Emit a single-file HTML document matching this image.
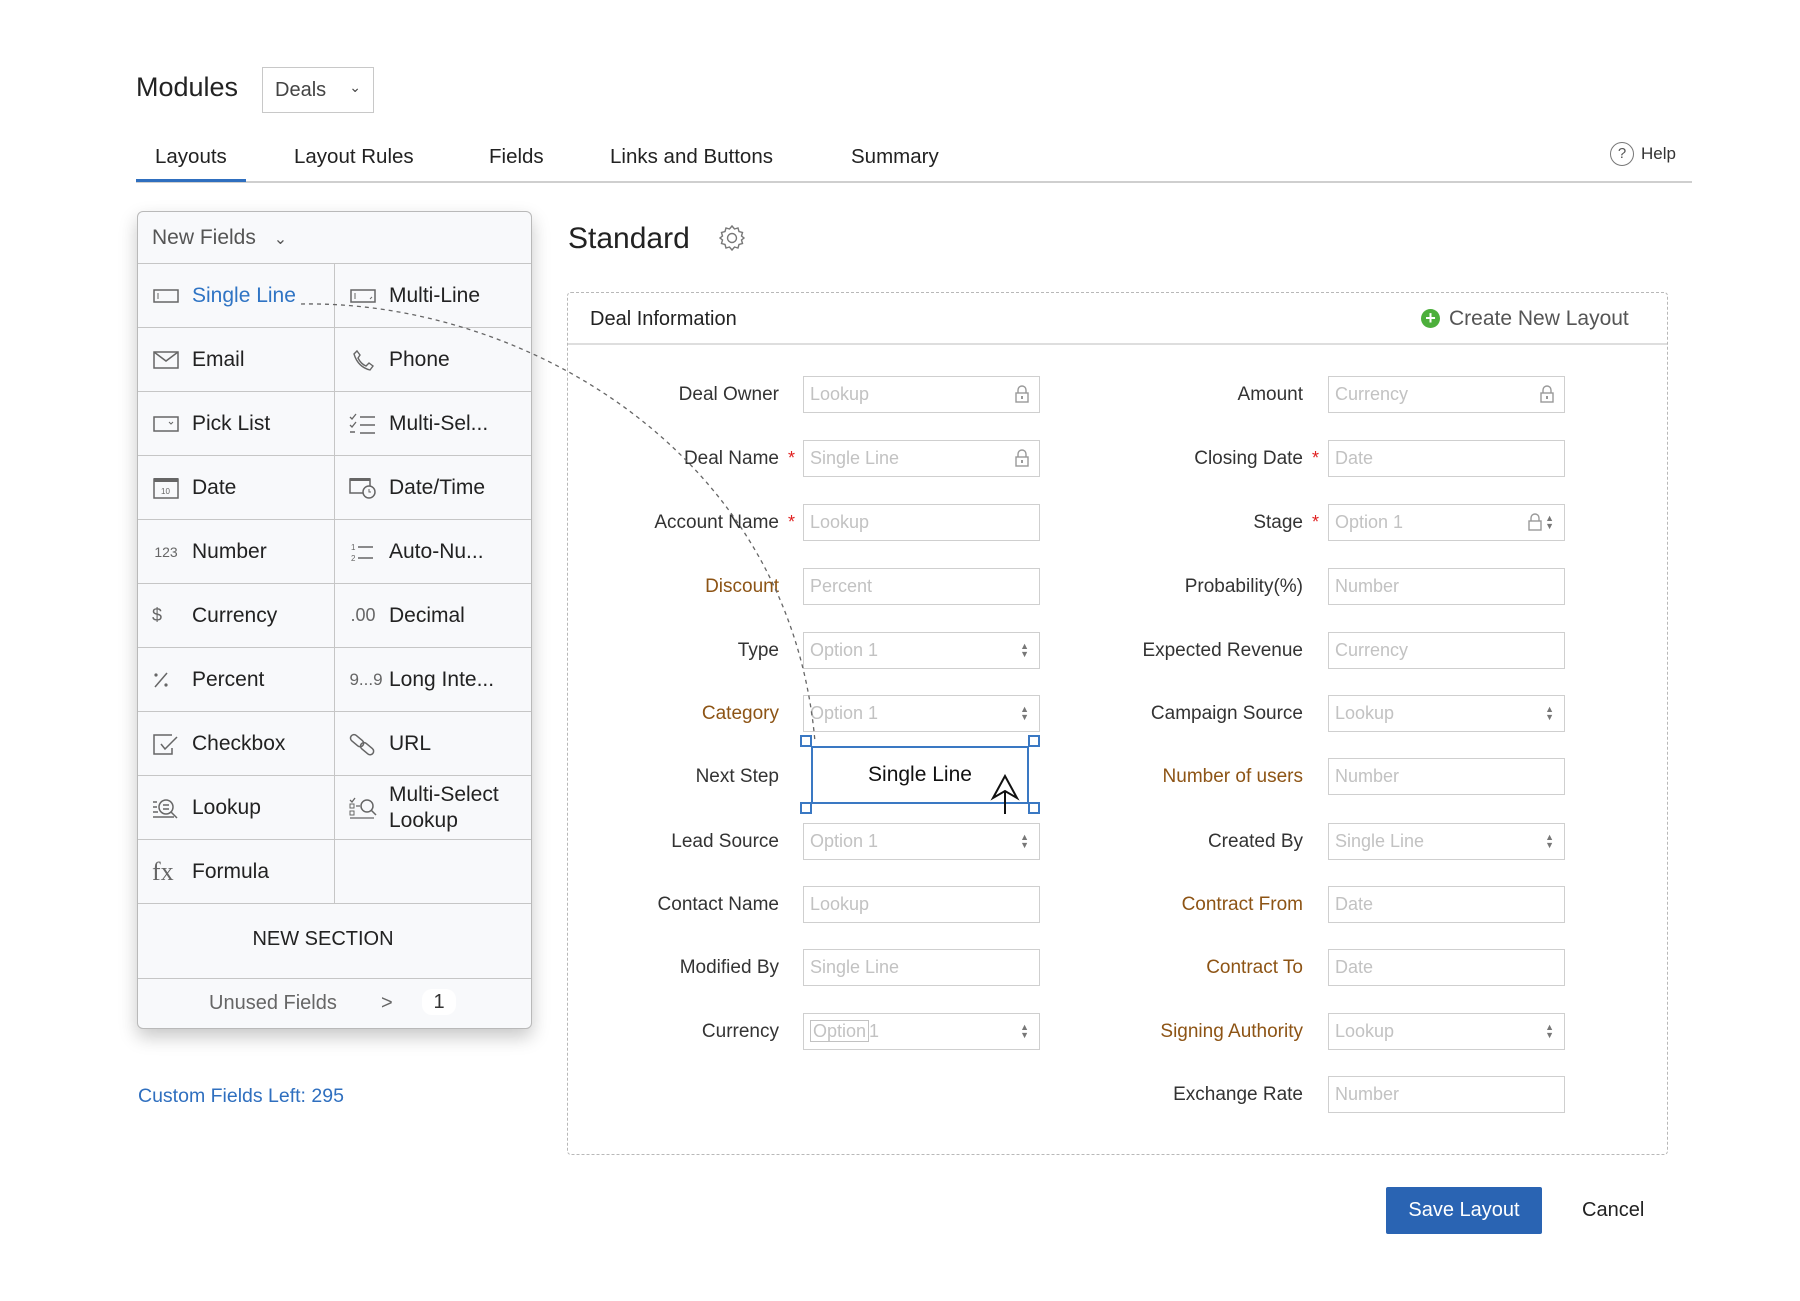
<!DOCTYPE html>
<html><head><meta charset="utf-8"><style>
*{box-sizing:border-box;margin:0;padding:0}
body{width:1800px;height:1301px;background:#fff;font-family:"Liberation Sans",sans-serif;color:#333;position:relative;overflow:hidden}
.a{position:absolute}
.tab{position:absolute;top:145px;font-size:20.5px;color:#222}
.panel{position:absolute;left:137px;top:211px;width:395px;height:818px;background:#f8f9fb;border:1px solid #b9b9b9;border-radius:6px;box-shadow:0 8px 18px rgba(0,0,0,.22)}
.row{position:absolute;left:0;width:393px;height:64px;border-top:1px solid #c6c6c6}
.row .c{position:absolute;top:0;height:63px;display:flex;align-items:center;font-size:21px;color:#222}
.row .l{left:0;width:197px;padding-left:14px;border-right:1px solid #c6c6c6}
.row .r{left:197px;width:196px;padding-left:14px}
.ic{width:28px;margin-right:12px;display:inline-flex;justify-content:center;color:#666;font-size:14px}
.lab{position:absolute;font-size:19px;color:#333;text-align:right;width:300px;line-height:22px}
.br{color:#8d5415}
.inp{position:absolute;width:237px;height:37px;border:1.5px solid #cfcfcf;font-size:18px;color:#c2c2c2;padding-left:6px;line-height:34px;background:#fff}
.star{position:absolute;color:#e02020;font-size:18px}
.lk{position:absolute;right:10px;top:8px}
.ud{position:absolute;right:10px;top:9px;font-size:9px;line-height:8px;color:#777}
</style></head><body>
<div class="a" style="left:136px;top:72px;font-size:27px;color:#222">Modules</div>
<div class="a" style="left:262px;top:67px;width:112px;height:46px;border:1px solid #c8c8c8;font-size:20px;color:#444;padding:11px 0 0 12px">Deals<span style="position:absolute;right:12px;top:11px;font-size:14px">&#8964;</span></div>
<div class="tab" style="left:155px">Layouts</div>
<div class="tab" style="left:294px">Layout Rules</div>
<div class="tab" style="left:489px">Fields</div>
<div class="tab" style="left:610px">Links and Buttons</div>
<div class="tab" style="left:851px">Summary</div>
<div class="a" style="left:1610px;top:142px;width:24px;height:24px;border:1.5px solid #777;border-radius:50%;font-size:15px;text-align:center;line-height:21px;color:#555">?</div>
<div class="a" style="left:1641px;top:144px;font-size:17px;color:#333">Help</div>
<div class="a" style="left:136px;top:181px;width:1556px;height:2px;background:#cfcfcf"></div>
<div class="a" style="left:136px;top:179px;width:110px;height:3px;background:#2f6fbf"></div>

<div class="panel">
<div class="a" style="left:14px;top:14px;font-size:21px;color:#555">New Fields <span style="font-size:16px;margin-left:12px">&#8964;</span></div>
<div class="row" style="top:51px"><div class="c l" style="color:#2f74c4"><span class="ic"><svg width="26" height="14"><rect x="1" y="1" width="24" height="12" fill="none" stroke="#666" stroke-width="1.5"/><line x1="5" y1="4" x2="5" y2="10" stroke="#666"/></svg></span>Single Line</div><div class="c r"><span class="ic"><svg width="26" height="14"><rect x="1" y="1" width="24" height="12" fill="none" stroke="#666" stroke-width="1.5"/><line x1="5" y1="4" x2="5" y2="10" stroke="#666"/><line x1="20" y1="10" x2="22" y2="8" stroke="#666"/></svg></span>Multi-Line</div></div>
<div class="row" style="top:115px"><div class="c l"><span class="ic"><svg width="26" height="18"><rect x="1" y="1" width="24" height="16" fill="none" stroke="#666" stroke-width="1.5"/><path d="M1 1 L13 10 L25 1" fill="none" stroke="#666" stroke-width="1.5"/></svg></span>Email</div><div class="c r"><span class="ic"><svg width="22" height="22"><path d="M5 2 L8 6 L6 9 Q9 15 14 17 L17 14 L21 17 L18 21 Q6 18 2 5 Z" fill="none" stroke="#666" stroke-width="1.4"/></svg></span>Phone</div></div>
<div class="row" style="top:179px"><div class="c l"><span class="ic"><svg width="26" height="16"><rect x="1" y="1" width="24" height="14" fill="none" stroke="#666" stroke-width="1.5"/><path d="M16 6 L18 8 L20 6" fill="none" stroke="#666"/></svg></span>Pick List</div><div class="c r"><span class="ic"><svg width="28" height="22"><path d="M1 4 L3 6 L7 1 M1 12 L3 14 L7 9" fill="none" stroke="#666" stroke-width="1.3"/><path d="M11 4 H26 M11 12 H26 M11 20 H26 M1 19 H6" stroke="#666" stroke-width="1.5"/></svg></span>Multi-Sel...</div></div>
<div class="row" style="top:243px"><div class="c l"><span class="ic"><svg width="26" height="22"><rect x="1" y="2" width="24" height="19" fill="none" stroke="#666" stroke-width="1.5"/><rect x="1" y="1" width="24" height="4" fill="#666"/><text x="8" y="17" font-size="8" fill="#666" font-family="Liberation Sans">10</text></svg></span>Date</div><div class="c r"><span class="ic"><svg width="28" height="22"><rect x="1" y="2" width="20" height="14" fill="none" stroke="#666" stroke-width="1.5"/><rect x="1" y="1" width="20" height="3" fill="#666"/><circle cx="20" cy="15" r="6" fill="#f8f9fb" stroke="#666" stroke-width="1.5"/><path d="M20 12 V15 H22" fill="none" stroke="#666"/></svg></span>Date/Time</div></div>
<div class="row" style="top:307px"><div class="c l"><span class="ic">123</span>Number</div><div class="c r"><span class="ic"><svg width="24" height="20"><text x="0" y="8" font-size="8" fill="#666" font-family="Liberation Sans">1</text><text x="0" y="19" font-size="8" fill="#666" font-family="Liberation Sans">2</text><path d="M7 5 H22 M7 16 H22" stroke="#666" stroke-width="1.5"/></svg></span>Auto-Nu...</div></div>
<div class="row" style="top:371px"><div class="c l"><span class="ic" style="font-size:18px;justify-content:flex-start">$</span>Currency</div><div class="c r"><span class="ic" style="font-size:18px">.00</span>Decimal</div></div>
<div class="row" style="top:435px"><div class="c l"><span class="ic" style="justify-content:flex-start"><svg width="18" height="18"><path d="M15 2 L3 16" stroke="#666" stroke-width="1.5"/><circle cx="4" cy="4" r="1.6" fill="#666"/><circle cx="14" cy="14" r="1.6" fill="#666"/></svg></span>Percent</div><div class="c r"><span class="ic" style="font-size:17px;width:34px;margin-right:6px">9...9</span>Long Inte...</div></div>
<div class="row" style="top:499px"><div class="c l"><span class="ic"><svg width="26" height="22"><path d="M19 2 H1 V21 H19 V15" fill="none" stroke="#666" stroke-width="1.5"/><path d="M8 11 L12 16 L24 4" fill="none" stroke="#666" stroke-width="1.5"/></svg></span>Checkbox</div><div class="c r"><span class="ic"><svg width="28" height="26"><rect x="1" y="6" width="15" height="7" rx="3.5" transform="rotate(40 8 9)" fill="none" stroke="#666" stroke-width="1.5"/><rect x="11" y="14" width="15" height="7" rx="3.5" transform="rotate(40 18 17)" fill="none" stroke="#666" stroke-width="1.5"/></svg></span>URL</div></div>
<div class="row" style="top:563px"><div class="c l"><span class="ic"><svg width="30" height="24"><path d="M1 6 H5 M1 11 H5 M1 16 H6 M1 21 H22" stroke="#666" stroke-width="1.4"/><circle cx="14" cy="11" r="7" fill="none" stroke="#666" stroke-width="1.5"/><path d="M11 9 H17 M11 13 H17 M19 16 L25 22" stroke="#666" stroke-width="1.5"/></svg></span>Lookup</div><div class="c r" style="line-height:26px"><span class="ic"><svg width="30" height="24"><rect x="1" y="8" width="4" height="4" fill="none" stroke="#666"/><rect x="1" y="15" width="4" height="4" fill="none" stroke="#666"/><path d="M1 4 L3 6 L6 2 M7 10 H11 M1 22 H25" fill="none" stroke="#666" stroke-width="1.3"/><circle cx="18" cy="10" r="6" fill="none" stroke="#666" stroke-width="1.5"/><path d="M22 14 L27 19" stroke="#666" stroke-width="1.5"/></svg></span>Multi-Select<br>Lookup</div></div>
<div class="row" style="top:627px"><div class="c l"><span class="ic" style="font-size:26px;font-family:'Liberation Serif',serif;justify-content:flex-start">fx</span>Formula</div><div class="c r"></div></div>
<div class="row" style="top:691px;height:75px"><div class="a" style="left:0;width:370px;top:24px;text-align:center;font-size:20px;color:#222">NEW SECTION</div></div>
<div class="row" style="top:766px;height:50px;border-radius:0 0 6px 6px"><div class="a" style="left:71px;top:13px;font-size:20px;color:#666">Unused Fields</div><div class="a" style="left:243px;top:13px;font-size:20px;color:#666">&gt;</div><div class="a" style="left:284px;top:10px;width:34px;height:26px;background:#fff;border-radius:10px;text-align:center;font-size:20px;line-height:26px;color:#333">1</div></div>
</div>
<div class="a" style="left:138px;top:1085px;font-size:19.5px;color:#2f6fbf">Custom Fields Left: 295</div>

<div class="a" style="left:568px;top:222px;font-size:30px;color:#222">Standard</div>
<svg class="a" style="left:718px;top:224px" width="28" height="28" viewBox="0 0 28 28"><path d="M14 2 L16.5 5 L20 4 L21 7.5 L24.5 8.5 L23.5 12 L26 14 L23.5 16 L24.5 19.5 L21 20.5 L20 24 L16.5 23 L14 26 L11.5 23 L8 24 L7 20.5 L3.5 19.5 L4.5 16 L2 14 L4.5 12 L3.5 8.5 L7 7.5 L8 4 L11.5 5 Z" fill="none" stroke="#777" stroke-width="1.4"/><circle cx="14" cy="14" r="4.5" fill="none" stroke="#777" stroke-width="1.4"/></svg>

<div class="a" style="left:567px;top:292px;width:1101px;height:863px;border:1.5px dashed #b8b8b8;border-radius:4px"></div>
<div class="a" style="left:568px;top:343px;width:1099px;height:2px;background:#dedede"></div>
<div class="a" style="left:590px;top:308px;font-size:20px;color:#222">Deal Information</div>
<div class="a" style="left:1421px;top:309px;width:19px;height:19px;border-radius:50%;background:#4caf3b;color:#fff;font-size:18px;line-height:19px;text-align:center;font-weight:bold">+</div>
<div class="a" style="left:1449px;top:307px;font-size:21px;color:#555">Create New Layout</div>

<div class="lab" style="left:479px;top:384px">Deal Owner</div><div class="inp" style="left:803px;top:376px">Lookup<svg class="lk" width="14" height="18"><path d="M3 8 V5 a4 4 0 0 1 8 0 V8" fill="none" stroke="#999" stroke-width="1.4"/><rect x="1" y="8" width="12" height="9" fill="none" stroke="#999" stroke-width="1.4"/><rect x="6" y="11" width="2" height="3" fill="#999"/></svg></div>
<div class="lab" style="left:479px;top:448px">Deal Name</div><span class="star" style="left:788px;top:448px">*</span><div class="inp" style="left:803px;top:440px">Single Line<svg class="lk" width="14" height="18"><path d="M3 8 V5 a4 4 0 0 1 8 0 V8" fill="none" stroke="#999" stroke-width="1.4"/><rect x="1" y="8" width="12" height="9" fill="none" stroke="#999" stroke-width="1.4"/><rect x="6" y="11" width="2" height="3" fill="#999"/></svg></div>
<div class="lab" style="left:479px;top:512px">Account Name</div><span class="star" style="left:788px;top:512px">*</span><div class="inp" style="left:803px;top:504px">Lookup</div>
<div class="lab br" style="left:479px;top:576px">Discount</div><div class="inp" style="left:803px;top:568px">Percent</div>
<div class="lab" style="left:479px;top:640px">Type</div><div class="inp" style="left:803px;top:632px">Option 1<span class="ud">&#9650;<br>&#9660;</span></div>
<div class="lab br" style="left:479px;top:703px">Category</div><div class="inp" style="left:803px;top:695px">Option 1<span class="ud">&#9650;<br>&#9660;</span></div>
<div class="lab" style="left:479px;top:766px">Next Step</div>
<div class="lab" style="left:479px;top:831px">Lead Source</div><div class="inp" style="left:803px;top:823px">Option 1<span class="ud">&#9650;<br>&#9660;</span></div>
<div class="lab" style="left:479px;top:894px">Contact Name</div><div class="inp" style="left:803px;top:886px">Lookup</div>
<div class="lab" style="left:479px;top:957px">Modified By</div><div class="inp" style="left:803px;top:949px">Single Line</div>
<div class="lab" style="left:479px;top:1021px">Currency</div><div class="inp" style="left:803px;top:1013px"><span style="border:1px solid #c2c2c2;padding:0 2px;line-height:16px">Option</span>1<span class="ud">&#9650;<br>&#9660;</span></div>

<div class="lab" style="left:1003px;top:384px">Amount</div><div class="inp" style="left:1328px;top:376px">Currency<svg class="lk" width="14" height="18"><path d="M3 8 V5 a4 4 0 0 1 8 0 V8" fill="none" stroke="#999" stroke-width="1.4"/><rect x="1" y="8" width="12" height="9" fill="none" stroke="#999" stroke-width="1.4"/><rect x="6" y="11" width="2" height="3" fill="#999"/></svg></div>
<div class="lab" style="left:1003px;top:448px">Closing Date</div><span class="star" style="left:1312px;top:448px">*</span><div class="inp" style="left:1328px;top:440px">Date</div>
<div class="lab" style="left:1003px;top:512px">Stage</div><span class="star" style="left:1312px;top:512px">*</span><div class="inp" style="left:1328px;top:504px">Option 1<svg class="lk" style="right:22px" width="14" height="18"><path d="M3 8 V5 a4 4 0 0 1 8 0 V8" fill="none" stroke="#999" stroke-width="1.4"/><rect x="1" y="8" width="12" height="9" fill="none" stroke="#999" stroke-width="1.4"/></svg><span class="ud">&#9650;<br>&#9660;</span></div>
<div class="lab" style="left:1003px;top:576px">Probability(%)</div><div class="inp" style="left:1328px;top:568px">Number</div>
<div class="lab" style="left:1003px;top:640px">Expected Revenue</div><div class="inp" style="left:1328px;top:632px">Currency</div>
<div class="lab" style="left:1003px;top:703px">Campaign Source</div><div class="inp" style="left:1328px;top:695px">Lookup<span class="ud">&#9650;<br>&#9660;</span></div>
<div class="lab br" style="left:1003px;top:766px">Number of users</div><div class="inp" style="left:1328px;top:758px">Number</div>
<div class="lab" style="left:1003px;top:831px">Created By</div><div class="inp" style="left:1328px;top:823px">Single Line<span class="ud">&#9650;<br>&#9660;</span></div>
<div class="lab br" style="left:1003px;top:894px">Contract From</div><div class="inp" style="left:1328px;top:886px">Date</div>
<div class="lab br" style="left:1003px;top:957px">Contract To</div><div class="inp" style="left:1328px;top:949px">Date</div>
<div class="lab br" style="left:1003px;top:1021px">Signing Authority</div><div class="inp" style="left:1328px;top:1013px">Lookup<span class="ud">&#9650;<br>&#9660;</span></div>
<div class="lab" style="left:1003px;top:1084px">Exchange Rate</div><div class="inp" style="left:1328px;top:1076px">Number</div>

<div class="a" style="left:811px;top:746px;width:218px;height:58px;border:2px solid #3a78c3;background:#fff;text-align:center;font-size:21px;color:#111;line-height:54px">Single Line</div>
<div class="a" style="left:800px;top:735px;width:12px;height:12px;border:2px solid #3a78c3;background:#fff"></div>
<div class="a" style="left:1028px;top:735px;width:12px;height:12px;border:2px solid #3a78c3;background:#fff"></div>
<div class="a" style="left:800px;top:802px;width:12px;height:12px;border:2px solid #3a78c3;background:#fff"></div>
<div class="a" style="left:1028px;top:802px;width:12px;height:12px;border:2px solid #3a78c3;background:#fff"></div>
<svg class="a" style="left:990px;top:774px" width="30" height="42"><path d="M15 2 L3 24 L15 17 L27 24 Z" fill="#fff" stroke="#111" stroke-width="2"/><line x1="15" y1="17" x2="15" y2="40" stroke="#111" stroke-width="2"/></svg>

<svg class="a" style="left:0;top:0;pointer-events:none" width="1800" height="1301"><path d="M301 304 C 520 300 790 450 815 742" fill="none" stroke="#666" stroke-width="1.3" stroke-dasharray="4 4"/></svg>

<div class="a" style="left:1386px;top:1187px;width:156px;height:47px;background:#2a64b3;color:#fff;font-size:20px;text-align:center;line-height:47px;border-radius:2px">Save Layout</div>
<div class="a" style="left:1582px;top:1199px;font-size:20px;color:#222">Cancel</div>
</body></html>
